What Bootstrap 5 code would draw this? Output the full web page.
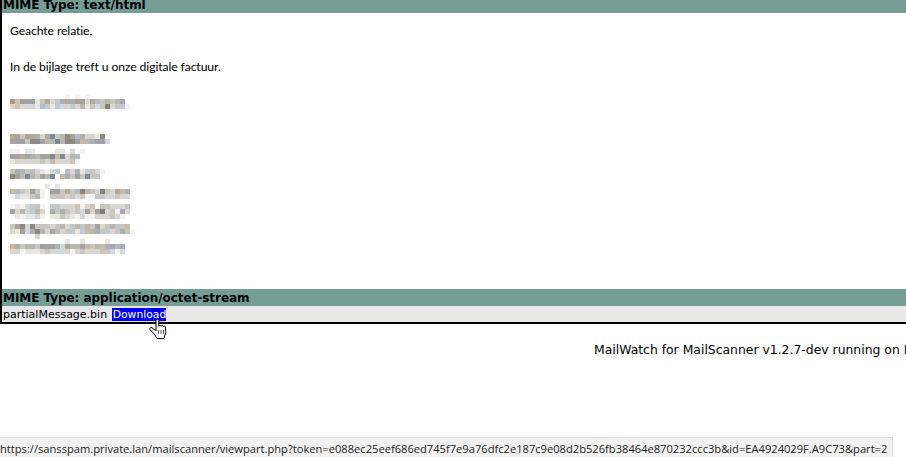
<!DOCTYPE html>
<html lang="nl">
<head>
<meta charset="utf-8">
<title>MailWatch</title>
<link rel="stylesheet" href="https://cdn.jsdelivr.net/npm/bootstrap@5.3.0/dist/css/bootstrap.min.css">
<style>
html,body{height:457px;overflow:hidden;background:#fff;}
body{font-family:"DejaVu Sans",sans-serif;color:#000;}
.msg-frame{border-left:2px solid #000;border-bottom:2px solid #000;}
.mime-bar{background:#739d95;font-weight:700;font-size:12px;letter-spacing:-.05px;line-height:19px;height:17px;padding-left:1px;white-space:nowrap;}
.mime-first{height:13px;line-height:11px;}
.mail-body{height:276px;padding:9px 0 0 8px;font-family:Lato,"Liberation Sans",sans-serif;font-size:12.2px;letter-spacing:-.1px;line-height:18px;}
.mail-body p{margin:0 0 18px;}
.blur-art{display:block;}
.file-row{background:#e8e8e8;height:16px;font-size:11px;line-height:17px;padding-left:1px;white-space:nowrap;}
.dl-link{background:#0000f0;color:#fff;text-decoration:none;font-size:10.8px;padding:0 0 0 1px;margin-left:1px;}
.foot-line{font-size:12.4px;line-height:18px;padding:17px 0 0 594px;white-space:nowrap;}
.hand-cursor{position:absolute;left:149px;top:317px;}
.status-tip{position:absolute;left:0;top:437px;width:893px;height:20px;background:#f2f2f2;border:1px solid #dcdcdc;border-left:0;border-bottom:0;font-family:"Open Sans","Noto Sans",sans-serif;font-size:11.15px;line-height:22px;color:#222;white-space:nowrap;overflow:hidden;}
</style>
</head>
<body>
<div class="msg-frame">
  <div class="mime-bar mime-first">MIME Type: text/html</div>
  <div class="mail-body">
    <p>Geachte relatie,</p>
    <p>In de bijlage treft u onze digitale factuur.</p>
    <svg class="blur-art" id="blur" width="200" height="170" aria-hidden="true"></svg>
  </div>
  <div class="mime-bar">MIME Type: application/octet-stream</div>
  <div class="file-row">partialMessage.bin <a class="dl-link" href="#">Download</a></div>
</div>
<div class="foot-line">MailWatch for MailScanner v1.2.7-dev running on Linux</div>
<svg class="hand-cursor" width="18" height="24" viewBox="0 0 18 24" aria-hidden="true">
  <path d="M7 3.500c0-1.800 2.800-1.800 2.800 0v5.700c.2-1.200 2.200-1.200 2.400 0 .2-1 2-1 2.200.2.200-.8 2-.6 2.100.6l.2 5.500-1.700 6H8L6 18 1 12.500c-.8-1.400.8-2.500 2-1.800l4 3z" fill="#fff" stroke="#000"/>
  <path d="M9.500 13v4M12 13v4M14.500 13v4" stroke="#555" fill="none"/>
</svg>
<div class="status-tip">https://sansspam.private.lan/mailscanner/viewpart.php?token=e088ec25eef686ed745f7e9a76dfc2e187c9e08d2b526fb38464e870232ccc3b&amp;id=EA4924029F.A9C73&amp;part=2</div>
<script>
var pal={a:'#a9a49b',b:'#b9b7b2',c:'#c9c6c0',d:'#d9d6d2',e:'#e8e6e3',f:'#f3f2f1',g:'#a2a2a6',h:'#8d8a86',i:'#b5bcc5',j:'#d3d8de',k:'#a8b0b2',l:'#c3cbd2',m:'#7f8a96',n:'#c6b9a8',o:'#e2d6c8',p:'#c8c6d2',q:'#a89c88',s:'#857c72',t:'#f0f5f9',u:'#b4aa9c',v:'#8c8478',w:'#a8a4bc'};
var rows=[
[94,'...........f.f.f'],
[99,'qcgggecudckuk aajuicbcbw.'.replace(' ','')],
[104,'dcojjeileljdldbecjcsjcpt'],
[134,'uacaukdumcbhaikddeh'],
[139,'aggchhgbbmbhhgnbkggj'],
[149,'ff.ee....ee.j.f'],
[154,'gauakbgamnmdbi'],
[159,'edojddcdndjdcf'],
[169,'ckbcidefdl.idkelcdf'],
[174,'haimbcgbm.nkcgcmcp'],
[184,'.......e.e'],
[189,'nicdgcf.ggcucivbcjvcdunk'],
[194,'tjeecbt.cccdcdcftccjdcdj'],
[204,'tefdlct.lcjddcfdc.ccjddc'],
[209,'adbdlbo.kckcdcdgoasdcfwd'],
[214,'.efeejf.eecdefjffdddcdf.'],
[224,'cahdhcccdcbdcbcbcgdcbccn'],
[229,'deajkhbdaidclelnbkcldckct'],
[234,'.....d'],
[239,'...........e..e....e....'],
[244,'nkcbbcgagkdabbgncbnkwbk'],
[249,'odfeeedcdjjdfdcdddcpjfj']
];
var out='';
rows.forEach(function(r){
  var x=0;
  r[1].split('').forEach(function(ch){
    if(pal[ch]) out+='<rect x="'+x+'" y="'+(r[0]-94)+'" width="5" height="5" fill="'+pal[ch]+'"/>';
    x+=5;
  });
});
document.getElementById('blur').innerHTML=out;
</script>
<script src="https://cdn.jsdelivr.net/npm/bootstrap@5.3.0/dist/js/bootstrap.bundle.min.js"></script>
</body>
</html>
